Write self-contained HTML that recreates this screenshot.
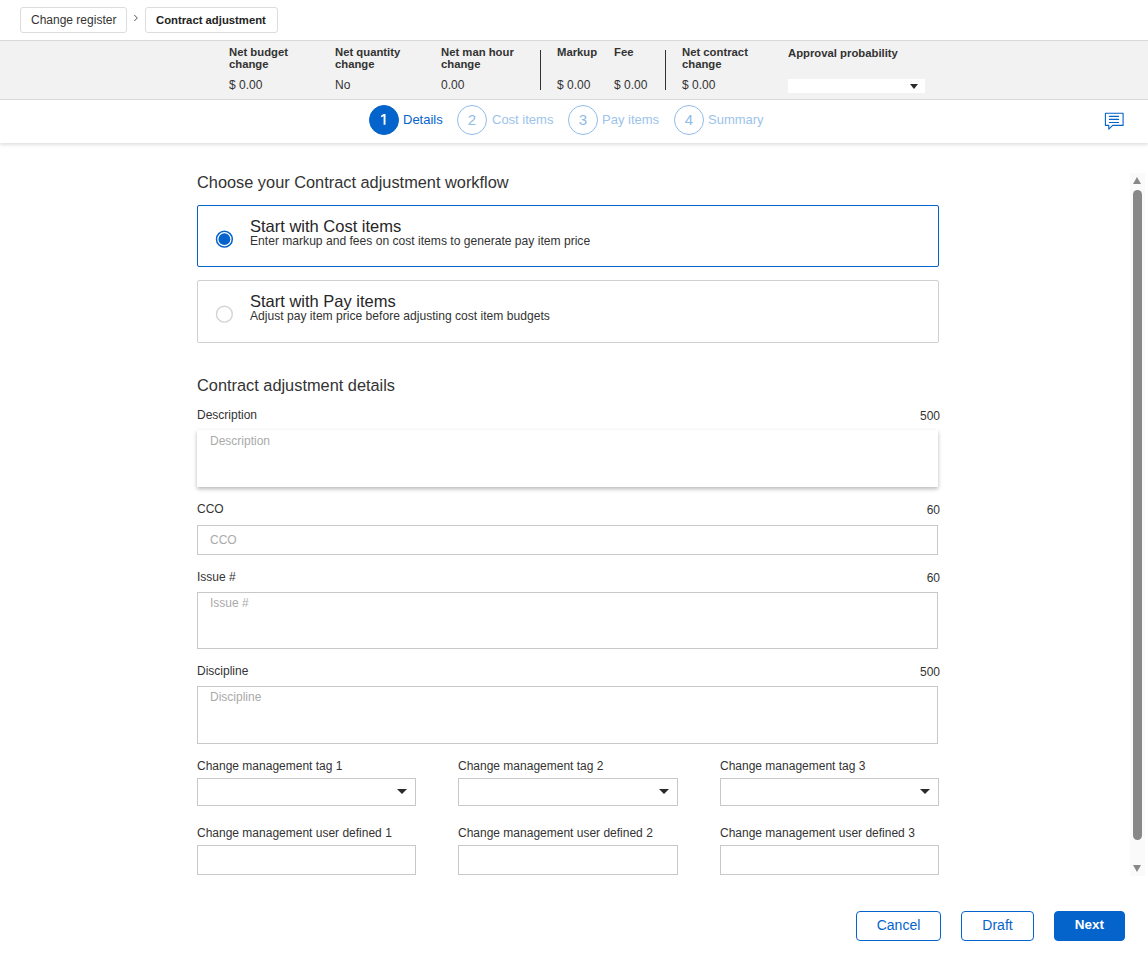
<!DOCTYPE html>
<html><head><meta charset="utf-8">
<style>
*{box-sizing:border-box;margin:0;padding:0}
html,body{width:1148px;height:976px;overflow:hidden;background:#fff;font-family:"Liberation Sans",sans-serif;color:#262626}
.abs{position:absolute;white-space:nowrap}
.crumb{position:absolute;white-space:nowrap;top:7px;height:26px;border:1px solid #dcdcdc;border-radius:3px;background:#fff;font-size:12px;line-height:25px;padding:0 10px;color:#333}
#band{position:absolute;left:0;top:40px;width:1148px;height:60px;background:#f2f2f2;border-top:1px solid #d9d9d9;border-bottom:1px solid #d9d9d9}
.hd{position:absolute;white-space:nowrap;font-size:11.3px;font-weight:bold;line-height:12px;color:#333}
.val{position:absolute;white-space:nowrap;font-size:12px;line-height:14px;color:#333}
.vdiv{position:absolute;top:50px;width:1px;height:40px;background:#333}
#stepper{position:absolute;left:0;top:100px;width:1148px;height:43px;background:#fff;box-shadow:0 2px 3px rgba(0,0,0,0.12)}
.circ{position:absolute;top:105px;width:30px;height:30px;border-radius:50%;border:1px solid #8fbbe8;color:#8fbbe8;font-size:15px;line-height:28px;text-align:center}
.circ.on{background:#0563cc;border-color:#0563cc;color:#fff}
.stxt{position:absolute;top:112px;font-size:13px;line-height:16px;color:#9cc3ea}
.stxt.on{color:#0563cc}
.h2{position:absolute;left:197px;font-size:16.35px;line-height:20px;color:#333}
.rbox{position:absolute;left:197px;width:742px;height:62px;border:1px solid #d0d0d0;border-radius:2px}
.rbox.sel{border-color:#0563cc}
.radio{position:absolute;left:17px;top:24px;width:20px;height:20px}
.rt{position:absolute;left:52px;top:11px;font-size:16.5px;line-height:18px;color:#262626}
.rs{position:absolute;left:52px;top:28px;font-size:12.1px;line-height:14px;color:#333}
.lbl{position:absolute;left:197px;font-size:12px;line-height:14px;color:#333}
.cnt{position:absolute;right:208px;font-size:12px;line-height:14px;color:#333}
.inp{position:absolute;left:197px;width:741px;border:1px solid #c8c8c8;background:#fff}
.ph{position:absolute;left:12px;font-size:12px;line-height:14px;color:#aaa}
.sel3{position:absolute;height:28px;border:1px solid #c8c8c8;background:#fff}
.caret{position:absolute;right:8px;top:10px;width:0;height:0;border-left:5px solid transparent;border-right:5px solid transparent;border-top:5px solid #2a2a2a}
.btn{position:absolute;top:911px;height:30px;border:1px solid #0563cc;border-radius:4px;font-size:14px;line-height:26px;text-align:center;color:#0563cc;background:#fff}
.btn.pri{background:#0563cc;color:#fff;font-weight:bold;font-size:13.5px}
</style></head><body>

<div class="crumb" style="left:20px;width:107px">Change register</div>
<svg class="abs" style="left:132px;top:13px" width="8" height="10" viewBox="0 0 8 10"><path d="M2.3 2l3 3l-3 3" fill="none" stroke="#555" stroke-width="1"/></svg>
<div class="crumb" style="left:145px;width:133px;font-weight:bold;color:#222;font-size:11.3px">Contract adjustment</div>

<div id="band"></div>
<div class="hd" style="left:229px;top:46px">Net budget<br>change</div>
<div class="val" style="left:229px;top:78px">$ 0.00</div>
<div class="hd" style="left:335px;top:46px">Net quantity<br>change</div>
<div class="val" style="left:335px;top:78px">No</div>
<div class="hd" style="left:441px;top:46px">Net man hour<br>change</div>
<div class="val" style="left:441px;top:78px">0.00</div>
<div class="vdiv" style="left:540px"></div>
<div class="hd" style="left:557px;top:46px">Markup</div>
<div class="val" style="left:557px;top:78px">$ 0.00</div>
<div class="hd" style="left:614px;top:46px">Fee</div>
<div class="val" style="left:614px;top:78px">$ 0.00</div>
<div class="vdiv" style="left:665px"></div>
<div class="hd" style="left:682px;top:46px">Net contract<br>change</div>
<div class="val" style="left:682px;top:78px">$ 0.00</div>
<div class="hd" style="left:788px;top:47px">Approval probability</div>
<div class="abs" style="left:788px;top:79px;width:137px;height:14px;background:#fff"><div class="caret" style="right:7px;top:5px;border-left-width:4.5px;border-right-width:4.5px"></div></div>

<div id="stepper"></div>
<div class="circ on" style="left:369px"><svg style="position:absolute;left:-1px;top:-1px" width="30" height="30" viewBox="0 0 30 30"><path d="M14.6 9.1h1.9v10.7h-1.9v-8.5l-2.6 0.9v-1.5z" fill="#fff"/></svg></div>
<div class="stxt on" style="left:403px">Details</div>
<div class="circ" style="left:457px">2</div>
<div class="stxt" style="left:492px">Cost items</div>
<div class="circ" style="left:568px">3</div>
<div class="stxt" style="left:602px">Pay items</div>
<div class="circ" style="left:674px">4</div>
<div class="stxt" style="left:708px">Summary</div>
<svg class="abs" style="left:1104px;top:112px" width="21" height="19" viewBox="0 0 21 19">
<path d="M1.4 1.2H19.1V13.4H8.7L4.8 17.2V13.4H1.4Z" fill="none" stroke="#0563cc" stroke-width="1.1" stroke-linejoin="round"/>
<path d="M5.4 4.35h9.2M5.4 7.4h9.2M5.4 10.5h9.2" stroke="#0563cc" stroke-width="1.1" stroke-linecap="round"/>
</svg>

<div class="h2" style="top:172px">Choose your Contract adjustment workflow</div>
<div class="rbox sel" style="top:205px"><svg class="radio" viewBox="0 0 20 20"><circle cx="9.4" cy="9.2" r="7.9" fill="#fff" stroke="#0563cc" stroke-width="1.5"/><circle cx="9.4" cy="9.2" r="5.9" fill="#0563cc"/></svg><div class="rt">Start with Cost items</div><div class="rs">Enter markup and fees on cost items to generate pay item price</div></div>
<div class="rbox" style="top:280px;height:63px"><svg class="radio" viewBox="0 0 20 20"><circle cx="9.4" cy="9.2" r="7.9" fill="#fff" stroke="#d4d4d4" stroke-width="1.4"/></svg><div class="rt">Start with Pay items</div><div class="rs">Adjust pay item price before adjusting cost item budgets</div></div>

<div class="h2" style="top:375px">Contract adjustment details</div>
<div class="lbl" style="top:408px">Description</div><div class="cnt" style="top:409px">500</div>
<div class="inp" style="top:430px;height:57px;border:none;box-shadow:0 2px 4px rgba(0,0,0,0.28)"><div class="ph" style="top:4px;left:13px">Description</div></div>
<div class="lbl" style="top:502px">CCO</div><div class="cnt" style="top:503px">60</div>
<div class="inp" style="top:525px;height:30px"><div class="ph" style="top:7px">CCO</div></div>
<div class="lbl" style="top:570px">Issue #</div><div class="cnt" style="top:571px">60</div>
<div class="inp" style="top:592px;height:57px"><div class="ph" style="top:3px">Issue #</div></div>
<div class="lbl" style="top:664px">Discipline</div><div class="cnt" style="top:665px">500</div>
<div class="inp" style="top:686px;height:58px"><div class="ph" style="top:3px">Discipline</div></div>

<div class="lbl" style="top:759px">Change management tag 1</div>
<div class="lbl" style="top:759px;left:458px">Change management tag 2</div>
<div class="lbl" style="top:759px;left:720px">Change management tag 3</div>
<div class="sel3" style="left:197px;top:778px;width:219px"><div class="caret"></div></div>
<div class="sel3" style="left:458px;top:778px;width:220px"><div class="caret"></div></div>
<div class="sel3" style="left:720px;top:778px;width:219px"><div class="caret"></div></div>

<div class="lbl" style="top:826px">Change management user defined 1</div>
<div class="lbl" style="top:826px;left:458px">Change management user defined 2</div>
<div class="lbl" style="top:826px;left:720px">Change management user defined 3</div>
<div class="sel3" style="left:197px;top:845px;width:219px;height:30px"></div>
<div class="sel3" style="left:458px;top:845px;width:220px;height:30px"></div>
<div class="sel3" style="left:720px;top:845px;width:219px;height:30px"></div>

<!-- scrollbar -->
<div class="abs" style="left:1130px;top:173px;width:15px;height:703px;background:#fafafa"></div>
<div class="abs" style="left:1133px;top:177px;width:0;height:0;border-left:4.5px solid transparent;border-right:4.5px solid transparent;border-bottom:7px solid #888"></div>
<div class="abs" style="left:1133px;top:190px;width:9px;height:650px;border-radius:5px;background:#888"></div>
<div class="abs" style="left:1133px;top:865px;width:0;height:0;border-left:4.5px solid transparent;border-right:4.5px solid transparent;border-top:7px solid #888"></div>

<div class="btn" style="left:856px;width:85px">Cancel</div>
<div class="btn" style="left:961px;width:73px">Draft</div>
<div class="btn pri" style="left:1054px;width:71px">Next</div>

</body></html>
